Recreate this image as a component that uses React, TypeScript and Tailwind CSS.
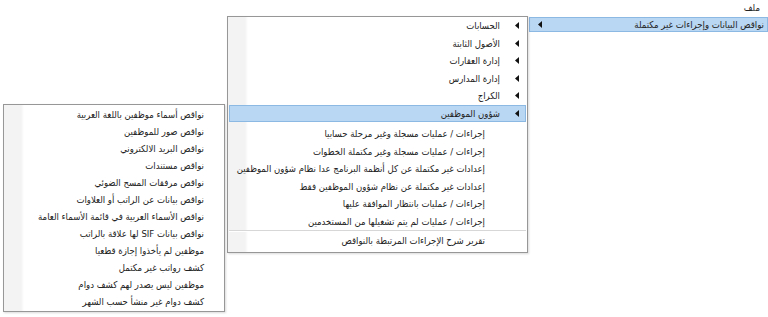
import React from 'react';

const MAIN_ITEMS = ['الحسابات', 'الأصول الثابتة', 'إدارة العقارات', 'إدارة المدارس', 'الكراج', 'شؤون الموظفين'];

const PROCEDURES = [
  'إجراءات / عمليات مسجلة وغير مرحلة حسابيا',
  'إجراءات / عمليات مسجلة وغير مكتملة الخطوات',
  'إعدادات غير مكتملة عن كل أنظمة البرنامج عدا نظام شؤون الموظفين',
  'إعدادات غير مكتملة عن نظام شؤون الموظفين فقط',
  'إجراءات / عمليات بانتظار الموافقة عليها',
  'إجراءات / عمليات لم يتم تشغيلها من المستخدمين',
];

const STAFF_GAPS = [
  'نواقص أسماء موظفين باللغة العربية',
  'نواقص صور للموظفين',
  'نواقص البريد الالكتروني',
  'نواقص مستندات',
  'نواقص مرفقات المسح الضوئي',
  'نواقص بيانات عن الراتب أو العلاوات',
  'نواقص الأسماء العربية في قائمة الأسماء العامة',
  'نواقص بيانات SIF لها علاقة بالراتب',
  'موظفين لم يأخذوا إجازة قطعيا',
  'كشف رواتب غير مكتمل',
  'موظفين ليس يصدر لهم كشف دوام',
  'كشف دوام غير منشأ حسب الشهر',
];

const Arrow = () => (
  <svg width="4" height="7" viewBox="0 0 4 7" className="shrink-0">
    <path d="M0 3.5L4 0V7Z" fill="#111" />
  </svg>
);

export default function App() {
  return (
    <div className="relative w-[768px] h-[317px] overflow-hidden bg-white text-[9.5px] leading-none text-[#222] font-['DejaVu_Sans_Condensed','DejaVu_Sans',sans-serif]">
      {/* Menu bar */}
      <div dir="rtl" className="h-[16px] flex items-center pr-[8px]">
        ملف
      </div>

      {/* Top level dropdown */}
      <div className="absolute left-[528px] top-[16px] w-[240px] h-[18px]">
        <div dir="rtl" className="ml-[1px] mt-[1px] h-[15px] flex items-center bg-[#b9d6f3] border border-[#8cb8e4]">
          <span className="pr-[3px] whitespace-nowrap">نواقص البيانات وإجراءات غير مكتملة</span>
          <div className="flex-1" />
          <div className="pl-[8px]"><Arrow /></div>
        </div>
      </div>

      {/* Second level */}
      <div className="absolute left-[227px] top-[16px] w-[301px] h-[237px] border border-[#979797] bg-[linear-gradient(90deg,#f3f3f3_0px,#f3f3f3_17px,#ffffff_20px)] shadow-[1px_1px_2px_rgba(0,0,0,0.15)]">
        {MAIN_ITEMS.map((item, i) => {
          const active = i === MAIN_ITEMS.length - 1;
          return (
            <div
              key={item}
              dir="rtl"
              className={`mx-[1px] h-[17.5px] flex items-center ${active ? 'bg-[#b9d6f3] border border-[#8cb8e4]' : 'border border-transparent'}`}
            >
              <div className="pr-[6px] pl-[15px]"><Arrow /></div>
              <span className="whitespace-nowrap">{item}</span>
            </div>
          );
        })}
        <div className="h-[3px]" />
        {PROCEDURES.map(item => (
          <div key={item} dir="rtl" className="h-[17.5px] flex items-center pr-[42px]">
            <span className="whitespace-nowrap">{item}</span>
          </div>
        ))}
        <div className="mx-[1px] h-[2px] border-t border-[#d7d7d7] bg-white" />
        <div dir="rtl" className="h-[17.5px] flex items-center pr-[42px]">
          <span className="whitespace-nowrap">تقرير شرح الإجراءات المرتبطة بالنواقص</span>
        </div>
      </div>

      {/* Third level */}
      <div className="absolute left-[3px] top-[104px] w-[222px] h-[208px] py-[1px] border border-[#979797] bg-[linear-gradient(90deg,#f3f3f3_0px,#f3f3f3_17px,#ffffff_20px)] shadow-[1px_1px_2px_rgba(0,0,0,0.15)]">
        {STAFF_GAPS.map(item => (
          <div key={item} dir="rtl" className="h-[17px] flex items-center pr-[20px]">
            <span className="whitespace-nowrap">{item}</span>
          </div>
        ))}
      </div>
    </div>
  );
}
